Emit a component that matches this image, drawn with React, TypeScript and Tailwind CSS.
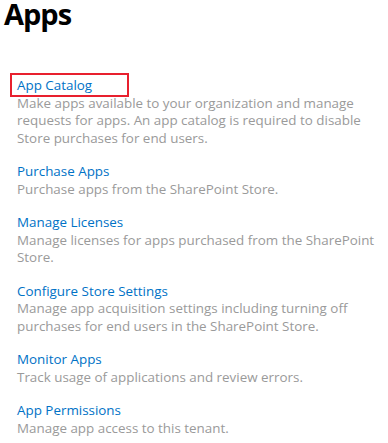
const items = [
  {
    title: "App Catalog",
    desc: "Make apps available to your organization and manage requests for apps. An app catalog is required to disable Store purchases for end users.",
    highlight: true,
  },
  { title: "Purchase Apps", desc: "Purchase apps from the SharePoint Store." },
  {
    title: "Manage Licenses",
    desc: "Manage licenses for apps purchased from the SharePoint Store.",
  },
  {
    title: "Configure Store Settings",
    desc: "Manage app acquisition settings including turning off purchases for end users in the SharePoint Store.",
  },
  { title: "Monitor Apps", desc: "Track usage of applications and review errors." },
  { title: "App Permissions", desc: "Manage app access to this tenant." },
];

export default function App() {
  return (
    <div className="w-[388px] h-[443px] bg-white overflow-hidden font-['Open_Sans',sans-serif]">
      <h1 className="pl-[4px] text-[29px] leading-[28px] font-bold tracking-[-1px] text-black">
        Apps
      </h1>
      <ul className="pl-[17px] pr-[6px] pt-[49px]">
        {items.map((item) => (
          <li key={item.title} className="mb-[16px] text-[13.4px] leading-[17.5px]">
            <div className="relative">
              <a className="text-[#0072c6]">{item.title}</a>
              {item.highlight && (
                <span className="absolute left-[-7px] top-[-4px] w-[119px] h-[24px] border-2 border-[#e8202e]" />
              )}
            </div>
            <p className="text-[#9a9a9a]">{item.desc}</p>
          </li>
        ))}
      </ul>
    </div>
  );
}
